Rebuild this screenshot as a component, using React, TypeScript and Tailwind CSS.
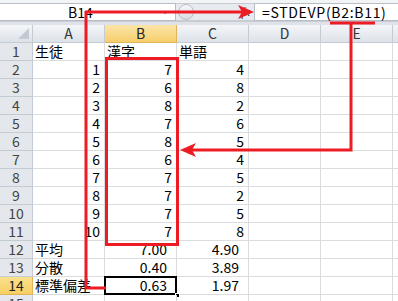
import React from "react";

const font = { fontFamily: '"Noto Sans CJK JP", "Liberation Sans", sans-serif' };

const cols = ["A", "B", "C", "D", "E"];

type Row = { a?: string; aNum?: boolean; b?: string; bDec?: boolean; c?: string; cDec?: boolean };

const rows: Row[] = [
  { a: "生徒", b: "漢字", c: "単語" },
  { a: "1", aNum: true, b: "7", c: "4" },
  { a: "2", aNum: true, b: "6", c: "8" },
  { a: "3", aNum: true, b: "8", c: "2" },
  { a: "4", aNum: true, b: "7", c: "6" },
  { a: "5", aNum: true, b: "8", c: "5" },
  { a: "6", aNum: true, b: "6", c: "4" },
  { a: "7", aNum: true, b: "7", c: "5" },
  { a: "8", aNum: true, b: "7", c: "2" },
  { a: "9", aNum: true, b: "7", c: "5" },
  { a: "10", aNum: true, b: "7", c: "8" },
  { a: "平均", b: "7.00", bDec: true, c: "4.90", cDec: true },
  { a: "分散", b: "0.40", bDec: true, c: "3.89", cDec: true },
  { a: "標準偏差", b: "0.63", bDec: true, c: "1.97", cDec: true },
  {},
];

const Cell = ({ text, num, dec }: { text?: string; num?: boolean; dec?: boolean }) => (
  <div
    className={`h-[18px] border-r border-b border-[#dadcdd] text-[14px] leading-[17px] text-black whitespace-nowrap ${
      num ? "text-right pr-[4px]" : "pl-[2px]"
    } ${dec ? "pr-[9px]" : ""}`}
  >
    {text}
  </div>
);

// red arrows and boxes drawn on top of the screenshot
const Annotations = () => (
  <svg className="absolute left-0 top-0 pointer-events-none" width={398} height={301}>
    <g stroke="#ed1c24" strokeWidth={3} fill="none">
      <path d="M86 11 V288 H106" />
      <path d="M85 12 H244" />
      <path d="M330 23 H375" />
      <path d="M351 22 V150 H190" />
      <rect x={106.5} y={58.5} width={71} height={186} />
    </g>
    <g fill="#ed1c24">
      <polygon points="254,12 238,5 242,12 238,19" />
      <polygon points="180,150 196,143 192,150 196,157" />
    </g>
  </svg>
);

export default function App() {
  return (
    <div className="relative w-[398px] h-[301px] overflow-hidden bg-white" style={font}>
      {/* formula bar */}
      <div className="flex h-[21px] bg-[#f3f4f6] pt-[3px]">
        <div className="flex items-center w-[176px] h-[18px] bg-white border border-[#b7bdc6] border-l-0 text-[14px] leading-[16px] text-black">
          <span className="flex-1 pl-[68px]">B14</span>
          <span className="mr-[7px] w-0 h-0 border-l-[3px] border-r-[3px] border-t-[3px] border-l-transparent border-r-transparent border-t-[#333]" />
        </div>
        <div className="flex items-center justify-between w-[78px] h-[18px] bg-[#e7eaee] border-y border-[#c7ccd3] pl-[2px] pr-[4px]">
          <span className="w-[16px] h-[16px] rounded-full border border-[#b9bec6] bg-gradient-to-b from-[#f6f7f9] to-[#d9dde3]" />
          <span className="text-[12px] italic text-[#333]" style={{ fontFamily: '"Liberation Serif", serif' }}>
            fx
          </span>
        </div>
        <div className="flex-1 h-[18px] bg-white border border-[#b7bdc6] border-r-0 pl-[7px] text-[14px] leading-[16px] tracking-[0.7px] text-black">
          =STDEVP(B2:B11)
        </div>
      </div>
      <div className="h-[4px] bg-[#dfe3e9] border-t border-[#c9ced6]" />

      {/* sheet */}
      <div className="grid grid-cols-[33px_72px_72px_72px_72px_72px_5px]">
        <div className="flex items-end justify-end p-[3px] h-[18px] border-r border-b border-[#c5cbd3] bg-gradient-to-b from-[#f4f6f9] to-[#dde2e9]">
          <svg width={11} height={11}>
            <polygon points="11,0 11,11 0,11" fill="#c3c9d1" />
          </svg>
        </div>
        {cols.map((c) => (
          <div
            key={c}
            className={`h-[18px] border-r border-b text-center text-[14px] leading-[17px] ${
              c === "B"
                ? "bg-gradient-to-b from-[#fbe5a6] to-[#f7ce6c] border-[#e0b45a] text-[#222]"
                : "bg-gradient-to-b from-[#f4f6f9] to-[#dde2e9] border-[#c5cbd3] text-[#333]"
            }`}
          >
            {c}
          </div>
        ))}
        <div className="h-[18px] border-b border-[#c5cbd3] bg-gradient-to-b from-[#f4f6f9] to-[#dde2e9]" />

        {rows.map((r, i) => {
          const n = i + 1;
          const sel = n === 14;
          return (
            <React.Fragment key={n}>
              <div
                className={`h-[18px] border-r border-b text-center text-[14px] leading-[17px] ${
                  sel
                    ? "bg-gradient-to-b from-[#fbe08e] to-[#f6cf63] border-[#e0b45a] text-[#222]"
                    : "bg-[#e4e8ed] border-[#c5cbd3] text-[#444]"
                }`}
              >
                {n}
              </div>
              <Cell text={r.a} num={r.aNum} />
              <div className="relative">
                <Cell text={r.b} num={n > 1} dec={r.bDec} />
                {sel && (
                  <>
                    <span className="absolute -left-px -top-px w-[73px] h-[19px] border-2 border-black" />
                    <span className="absolute -right-[3px] -bottom-[3px] w-[5px] h-[5px] bg-black border border-white" />
                  </>
                )}
              </div>
              <Cell text={r.c} num={n > 1} dec={r.cDec} />
              <Cell />
              <Cell />
              <div className="h-[18px] border-b border-[#dadcdd]" />
            </React.Fragment>
          );
        })}
      </div>

      <Annotations />
    </div>
  );
}
